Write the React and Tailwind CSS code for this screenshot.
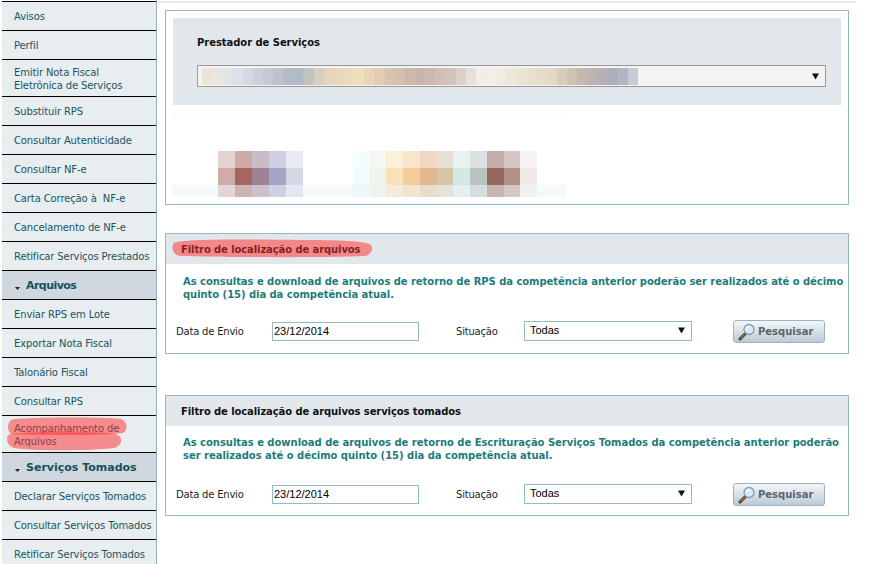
import React from 'react';

const menu = [
  { label: 'Avisos' },
  { label: 'Perfil' },
  { label: ['Emitir Nota Fiscal', 'Eletrônica de Serviços'] },
  { label: 'Substituir RPS' },
  { label: 'Consultar Autenticidade' },
  { label: 'Consultar NF-e' },
  { label: 'Carta Correção à\u00a0 NF-e' },
  { label: 'Cancelamento de NF-e' },
  { label: 'Retificar Serviços Prestados' },
  { label: 'Arquivos', section: true, narrow: true },
  { label: 'Enviar RPS em Lote' },
  { label: 'Exportar Nota Fiscal' },
  { label: 'Talonário Fiscal' },
  { label: 'Consultar RPS' },
  { label: ['Acompanhamento de', 'Arquivos'] },
  { label: 'Serviços Tomados', section: true },
  { label: 'Declarar Serviços Tomados' },
  { label: 'Consultar Serviços Tomados' },
  { label: 'Retificar Serviços Tomados' },
];

const selectBlur = ['#ece4d4', '#e8e6df', '#e0e5e7', '#dae1e8', '#d2dae2', '#c9d1da', '#c2cad4', '#bcc3cf', '#b3bcc9', '#b1bac7', '#c2c2c0', '#d5cfbd', '#e5d5bd', '#e8d8bb', '#ecdcbc', '#f0deba', '#e8d6b8', '#e2ccb2', '#d9c2b2', '#d4bfb1', '#ccb9ae', '#c8b6ac', '#cbb9af', '#cfbfb5', '#d3c3ba', '#dcd0c8', '#e6dfdb', '#f1ede8', '#f2efe9', '#efece6', '#ebe8dc', '#ebe4d4', '#e8e0cc', '#e6dcc8', '#e4d8c3', '#d8ccba', '#cfc2b4', '#c6b8b0', '#bcb4b4', '#b4b0b8', '#adaebc', '#b3b5c4', '#c9cbd4'];

const blurRows = [
  {
    cls: 'h-[17px]',
    left: ['#e5d3d3', '#cdaaa8', '#c9bcc6', '#cdd0e2', '#e9e9f2'],
    right: ['#f4fdfd', '#f3f8f2', '#faf0dc', '#fae5cb', '#eed8c4', '#e7e0d5', '#e8f3f0', '#dadfdf', '#c3aeaa', '#d6c6c3', '#f5f3f1'],
  },
  {
    cls: 'h-[17px]',
    left: ['#cfaca8', '#a6655f', '#9f8296', '#a3a6c9', '#d6d7e6'],
    right: ['#eefcfc', '#ecf5e9', '#f9e2b8', '#f5cd9a', '#e0b990', '#d7c5ac', '#d4e8e2', '#b8c3c1', '#95695f', '#b29088', '#f0e9e7'],
  },
  {
    cls: 'h-[12px] bg-[#f4f9fa]',
    left: ['#e3d5d5', '#cfb2b4', '#cdc0cc', '#ccd2e0', '#e4e7f0'],
    right: ['#eef7f8', '#eef3ef', '#f3ebdc', '#f3e4cf', '#e8dccb', '#e6e1da', '#e2f1ef', '#d7dee0', '#c6b5b0', '#d6c7c7', '#f2f1f2'],
  },
];

const Cells = ({ colors, className }) => (
  <div className={`flex ${className}`}>
    {colors.map((c, i) => (
      <div key={i} className="flex-1" style={{ backgroundColor: c }}></div>
    ))}
  </div>
);

const Arrow = () => (
  <svg width="7" height="7" viewBox="0 0 7 7" className="shrink-0">
    <path d="M0 0.5H7L3.5 6.5Z" fill="#111" />
  </svg>
);

const Magnifier = () => (
  <svg width="18" height="18" viewBox="0 0 18 18" className="shrink-0">
    <path d="M7.5 10.5L2 16" stroke="#4a3a20" strokeWidth="3" strokeLinecap="round" />
    <path d="M7 11L2.5 15.5" stroke="#c9a24a" strokeWidth="1" strokeLinecap="round" />
    <circle cx="11" cy="6.5" r="5" fill="#d8ecf8" stroke="#7b9db5" strokeWidth="1.3" />
    <path d="M8.5 5.5A3 3 0 0 1 11 3.5" stroke="#ffffff" strokeWidth="1.4" fill="none" />
  </svg>
);

const SideItem = ({ item }) => {
  if (item.section) {
    return (
      <div className={`h-[29px] bg-[#cfd8de] border-b border-black flex items-center pl-[13px] pt-[2px] font-bold text-[11px] text-[#14505c] ${item.narrow ? 'tracking-[-0.55px]' : ''}`}>
        <svg width="5" height="3" viewBox="0 0 5 3" className="mr-[6px] mt-[4px]">
          <path d="M0 0H5L2.5 3Z" fill="#222" />
        </svg>
        {item.label}
      </div>
    );
  }
  const twoLines = Array.isArray(item.label);
  return (
    <div className={`${twoLines ? 'h-[37px] pt-[1px]' : 'h-[29px]'} border-b border-black flex flex-col justify-center pl-[12px] text-[10px] leading-[13px] tracking-[-0.12px] whitespace-nowrap text-[#1a5560]`}>
      {twoLines ? item.label.map((l) => <div key={l}>{l}</div>) : item.label}
    </div>
  );
};

const FilterPanel = ({ title, lines, className, textClass, rowClass }) => (
  <div className={`border border-[#92bac8] w-[684px] h-[121px] ${className}`}>
    <div className="h-[30px] bg-[#e2e7eb] flex items-center pl-[15px] font-bold text-[10px] tracking-[-0.1px] text-[#111]">{title}</div>
    <div className={`pl-[17px] font-bold text-[10px] leading-[13px] whitespace-nowrap text-[#1c7c7c] ${textClass}`}>
      {lines.map((l) => <div key={l}>{l}</div>)}
    </div>
    <div className={`flex items-center pl-[10px] h-[23px] text-[10px] tracking-[-0.2px] text-[#222] ${rowClass}`}>
      <div className="w-[96px]">Data de Envio</div>
      <div className="w-[147px] h-[19px] border border-[#92bac8] pl-[1px] flex items-center text-[11px] tracking-normal text-black font-['Liberation_Sans',sans-serif]">23/12/2014</div>
      <div className="ml-[37px] w-[68px]">Situação</div>
      <div className="w-[168px] h-[20px] mb-[2px] border border-[#92bac8] pl-[5px] pr-[6px] flex items-center justify-between text-[11px] tracking-normal text-black font-['Liberation_Sans',sans-serif]">
        Todas
        <Arrow />
      </div>
      <button className="ml-[41px] w-[92px] h-[23px] rounded-[3px] border border-[#9db2c2] bg-gradient-to-b from-[#f4f7f9] to-[#bccad6] flex items-center pl-[4px] gap-[2px] font-bold text-[10px] tracking-normal text-[#5a6570]">
        <Magnifier />
        Pesquisar
      </button>
    </div>
  </div>
);

export default function App() {
  return (
    <div className="relative flex w-[890px] h-[564px] overflow-hidden bg-white font-['DejaVu_Sans',sans-serif]">
      <aside className="w-[157px] h-[564px] shrink-0 pl-[2px] pt-[1px] border-r border-[#8fb0ba]">
        <div className="border-t border-black bg-[#e8edef]">
          {menu.map((item, i) => <SideItem key={i} item={item} />)}
        </div>
      </aside>

      <main className="w-[699px]">
        <div className="h-[2px] mt-[1px] bg-[#e6e6e6]"></div>
        <div className="pl-[8px] pt-[7px]">
          <div className="border border-[#92bac8] w-[684px] h-[195px] p-[7px]">
            <div className="bg-[#e2e7eb] h-[87px] pl-[24px] pr-[15px] pt-[18px]">
              <div className="font-bold text-[10px] leading-[14px] tracking-[-0.05px] text-[#111]">Prestador de Serviços</div>
              <div className="mt-[15px] h-[22px] border border-[#999] bg-[#f3f3f3] flex items-center pl-[4px] pr-[6px] justify-between">
                <Cells colors={selectBlur} className="w-[436px] h-[17px]" />
                <Arrow />
              </div>
            </div>
            <div className="mt-[4px] h-[9px] w-[394px] bg-[#fdfdfb] -ml-[1px]"></div>
            <div className="mt-[33px] w-[394px] -ml-[1px]">
              {blurRows.map((r, i) => (
                <div key={i} className={`flex pl-[46px] gap-[50px] ${r.cls}`}>
                  <Cells colors={r.left} className="w-[85px]" />
                  <Cells colors={r.right} className="w-[184px]" />
                </div>
              ))}
            </div>
          </div>
          <FilterPanel
            className="mt-[28px]"
            textClass="pt-[11px] tracking-[-0.05px]"
            rowClass="mt-[19px]"
            title="Filtro de localização de arquivos"
            lines={[
              'As consultas e download de arquivos de retorno de RPS da competência anterior poderão ser realizados até o décimo',
              'quinto (15) dia da competência atual.',
            ]}
          />
          <FilterPanel
            className="mt-[41px]"
            textClass="pt-[10px] tracking-[-0.03px]"
            rowClass="mt-[21px]"
            title="Filtro de localização de arquivos serviços tomados"
            lines={[
              'As consultas e download de arquivos de retorno de Escrituração Serviços Tomados da competência anterior poderão',
              'ser realizados até o décimo quinto (15) dia da competência atual.',
            ]}
          />
        </div>
      </main>

      <svg className="absolute left-0 top-0 pointer-events-none" width="890" height="564">
        <g fill="#ff2a2a" fillOpacity="0.5">
          <path d="M174 243C178 239 240 239 300 240C340 240 366 241 371 245C374 250 370 256 364 256C320 258 200 257 180 256C172 254 171 247 174 243Z" />
          <path d="M11 420C20 417 100 417 121 419C128 422 128 430 123 433C100 436 30 435 11 434C7 430 7 424 11 420Z" />
          <path d="M8 435C20 431 90 431 116 434C124 437 122 446 114 448C90 451 30 451 14 448C7 446 6 439 8 435Z" />
        </g>
      </svg>
    </div>
  );
}
